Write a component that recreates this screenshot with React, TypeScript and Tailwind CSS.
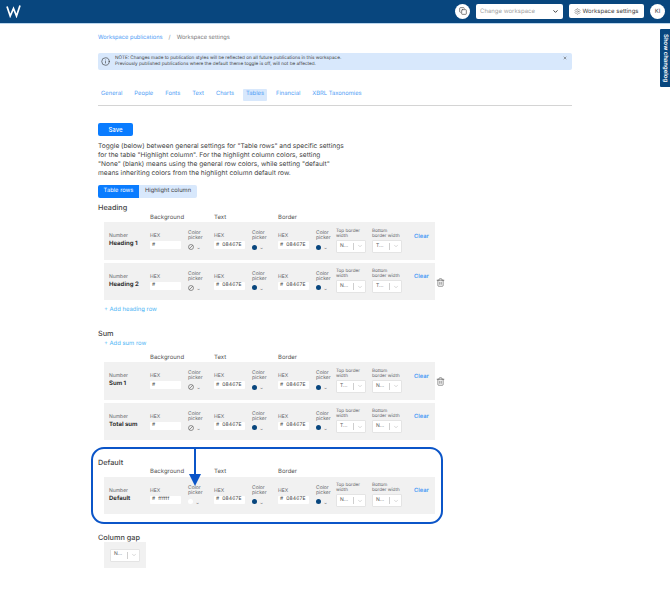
import { ChevronDown, Copy, Info, Settings, Trash2, X } from "lucide-react";

const tabs = ["General", "People", "Fonts", "Text", "Charts", "Tables", "Financial", "XBRL Taxonomies"];

function HexField({ value }: { value: string }) {
  return (
    <div className="w-[38px] shrink-0">
      <p className="mt-[1px] text-[5px] leading-[6px] text-[#5f6368]">HEX</p>
      <div className="mt-[2px] flex h-[8px] w-[31px] items-center rounded-[1px] bg-white pl-[2px] text-[5px] text-[#444]">
        <span className="mr-[3px]">#</span>
        <span className="tracking-[0.2px]">{value}</span>
      </div>
    </div>
  );
}

function ColorPicker({ color, width }: { color: string; width: string }) {
  return (
    <div className={`${width} shrink-0`}>
      <p className="w-[18px] text-[5px] leading-[5px] text-[#5f6368]">Color picker</p>
      <div className="mt-[3px] flex items-center gap-[3px]">
        {color === "none" ? (
          <svg width="6" height="6" viewBox="0 0 12 12" fill="none" stroke="#555" strokeWidth="1.2">
            <circle cx="6" cy="6" r="5" />
            <path d="M2.5 9.5l7-7" />
          </svg>
        ) : (
          <span
            className={`h-[5px] w-[5px] rounded-full ${color === "white" ? "bg-white" : "bg-[#08467e]"}`}
          />
        )}
        <span className="mt-[2px] text-[4px] leading-none text-[#555]">⌄</span>
      </div>
    </div>
  );
}

function SelectBox({ value }: { value: string }) {
  return (
    <div className="flex h-[13px] w-[30px] items-center rounded-[1px] border border-[#e4e4e4] bg-white pl-[3px] text-[5px] text-[#555]">
      <span className="w-[13px]">{value}</span>
      <span className="h-[7px] w-px bg-[#cfcfcf]" />
      <ChevronDown className="ml-[3px] text-[#999]" size={6} strokeWidth={1.5} />
    </div>
  );
}

function BorderSelect({ label, value }: { label: string; value: string }) {
  return (
    <div className="w-[36px] shrink-0">
      <p className="w-[28px] text-[4.6px] leading-[5px] text-[#5f6368]">{label}</p>
      <div className="mt-[1px]">
        <SelectBox value={value} />
      </div>
    </div>
  );
}

type RowProps = {
  name: string;
  bg?: string;
  picker?: string;
  top: string;
  bottom: string;
  trash?: boolean;
};

function StyleRow({ name, bg = "", picker = "none", top, bottom, trash }: RowProps) {
  return (
    <div className="relative mb-[3px] flex h-[37.5px] w-[331px] items-center bg-[#f1f1f1] pl-[5px]">
      <div className="w-[41px] shrink-0">
        <p className="text-[5px] leading-[7px] text-[#5f6368]">Number</p>
        <p className="text-[6px] font-bold leading-[8px] text-[#333]">{name}</p>
      </div>
      <HexField value={bg} />
      <ColorPicker color={picker} width="w-[26px]" />
      <HexField value="08467E" />
      <ColorPicker color="blue" width="w-[26px]" />
      <HexField value="08467E" />
      <ColorPicker color="blue" width="w-[20px]" />
      <BorderSelect label="Top border width" value={top} />
      <BorderSelect label="Bottom border width" value={bottom} />
      <span className="mb-[7px] ml-[6px] text-[5.8px] font-semibold text-[#4d9bf5]">Clear</span>
      {trash && (
        <Trash2 className="absolute left-[332px] top-[15px] text-[#444]" size={9} strokeWidth={1.5} />
      )}
    </div>
  );
}

function GroupLabels() {
  return (
    <div className="flex h-[9.5px] items-center pl-[52px] text-[6px] text-[#555]">
      <span className="w-[64px]">Background</span>
      <span className="w-[64px]">Text</span>
      <span>Border</span>
    </div>
  );
}

export default function App() {
  return (
    <div
      className="relative h-[595px] w-[670px] overflow-hidden bg-white antialiased [text-rendering:geometricPrecision]"
      style={{ fontFamily: "Inter, 'Liberation Sans', sans-serif" }}
    >
      <header className="flex h-[23.5px] items-center border-b border-[#b9d6ee] bg-[#08467e] pl-[6px] pr-[5px]">
        <svg width="15" height="13" viewBox="0 0 15 13" fill="none" stroke="white" strokeWidth="1.7">
          <path d="M1 1.5l3.2 9.5L7.5 3.5l3 7.5L14 .5" />
        </svg>
        <div className="ml-auto flex items-center">
          <span className="flex h-[15px] w-[15px] items-center justify-center rounded-full bg-white">
            <Copy className="text-[#444]" size={8} />
          </span>
          <div className="ml-[6px] flex h-[15px] w-[87px] items-center justify-between rounded-[2px] bg-white pl-[4px] pr-[4px] text-[6px] text-[#a3a3a3]">
            Change workspace
            <ChevronDown className="text-[#222]" size={7} strokeWidth={3} />
          </div>
          <div className="ml-[6px] flex h-[14px] w-[75px] items-center justify-center gap-[1px] rounded-[2px] bg-white text-[6px] text-[#444]">
            <Settings size={7} strokeWidth={1.2} />
            Workspace settings
          </div>
          <span className="ml-[6px] flex h-[15px] w-[15px] items-center justify-center rounded-full bg-white text-[6px] text-[#444]">
            KI
          </span>
        </div>
      </header>

      <main className="ml-[98px] w-[474px]">
        <nav className="mt-[10px] flex h-[10px] items-center text-[5.7px]">
          <span className="text-[#4d9bf5]">Workspace publications</span>
          <span className="mx-[6px] text-[#888]">/</span>
          <span className="text-[#777]">Workspace settings</span>
        </nav>

        <div className="relative mt-[9px] flex h-[17px] items-center rounded-[2px] bg-[#d8e8fc] pl-[3px]">
          <Info className="text-[#333]" size={9} strokeWidth={1.6} />
          <p className="ml-[5px] text-[4.65px] leading-[6px] text-[#444]">
            NOTE: Changes made to publication styles will be reflected on all future publications in this workspace.
            <br />
            Previously published publications where the default theme toggle is off, will not be affected.
          </p>
          <X className="absolute right-[5px] top-[3px] text-[#444]" size={4} strokeWidth={3} />
        </div>

        <div className="mt-[18px] flex h-[14px] items-center">
          {tabs.map((tab) => (
            <span
              key={tab}
              className={`mr-[6px] flex h-[12px] items-center rounded-[1px] px-[3px] text-[5.8px] text-[#4d9bf5] ${
                tab === "Tables" ? "bg-[#d8e8fc]" : ""
              }`}
            >
              {tab}
            </span>
          ))}
        </div>
        <div className="mt-[3px] h-px bg-[#d4d4d4]" />

        <button className="mt-[17px] flex h-[13.5px] w-[35px] items-center justify-center rounded-[2px] bg-[#0a7cff] text-[6px] font-medium text-white">
          Save
        </button>

        <p className="mt-[6px] whitespace-nowrap text-[6.6px] leading-[9px] text-[#444]">
          Toggle (below) between general settings for "Table rows" and specific settings
          <br />
          for the table "Highlight column". For the highlight column colors, setting
          <br />
          "None" (blank) means using the general row colors, while setting "default"
          <br />
          means inheriting colors from the highlight column default row.
        </p>

        <div className="mt-[7px] flex h-[12.5px] text-[5.8px]">
          <span className="flex w-[41px] items-center justify-center rounded-l-[2px] bg-[#0a7cff] text-white">
            Table rows
          </span>
          <span className="flex w-[58px] items-center justify-center rounded-r-[2px] bg-[#d8e8fc] text-[#444]">
            Highlight column
          </span>
        </div>

        <h3 className="mt-[4px] h-[11px] text-[7.3px] font-medium leading-[11px] text-[#444]">Heading</h3>
        <GroupLabels />
        <div className="ml-[6px]">
          <StyleRow name="Heading 1" top="N..." bottom="T..." />
          <StyleRow name="Heading 2" top="N..." bottom="T..." trash />
          <p className="mt-[6px] text-[5.9px] leading-[8px] text-[#4db5f5]">+ Add heading row</p>
        </div>

        <h3 className="mt-[14px] h-[11px] text-[7.3px] font-medium leading-[11px] text-[#444]">Sum</h3>
        <p className="ml-[6px] h-[9px] text-[5.9px] leading-[9px] text-[#4db5f5]">+ Add sum row</p>
        <div className="mt-[4.5px]">
          <GroupLabels />
        </div>
        <div className="ml-[6px]">
          <StyleRow name="Sum 1" top="T..." bottom="N..." trash />
          <StyleRow name="Total sum" top="T..." bottom="N..." />
        </div>

        <h3 className="mt-[17px] h-[10px] text-[7.3px] font-medium leading-[11px] text-[#444]">Default</h3>
        <GroupLabels />
        <div className="ml-[6px]">
          <StyleRow name="Default" bg="ffffff" picker="white" top="N..." bottom="N..." />
        </div>

        <h3 className="mt-[18px] h-[9px] text-[7.3px] font-medium leading-[11px] text-[#444]">Column gap</h3>
        <div className="ml-[6px] mt-[1px] flex h-[26px] w-[42px] items-center justify-center bg-[#f1f1f1]">
          <SelectBox value="N..." />
        </div>
      </main>

      {/* annotation drawn over the default row */}
      <div className="pointer-events-none absolute left-[91px] top-[447px] h-[77px] w-[352px] rounded-[13px] border-[2.5px] border-[#0b55c8]" />
      <svg className="pointer-events-none absolute left-[187px] top-[448px]" width="16" height="39" viewBox="0 0 16 39">
        <path d="M8 0v28" stroke="#0b55c8" strokeWidth="2" />
        <path d="M2 26h12l-6 12z" fill="#0b55c8" />
      </svg>

      <div className="absolute right-0 top-[29px] flex h-[58px] w-[10px] items-center justify-center rounded-l-[1px] bg-[#08467e]">
        <span className="whitespace-nowrap text-[6px] font-semibold text-white [writing-mode:vertical-rl]">
          Show changelog
        </span>
      </div>
    </div>
  );
}
